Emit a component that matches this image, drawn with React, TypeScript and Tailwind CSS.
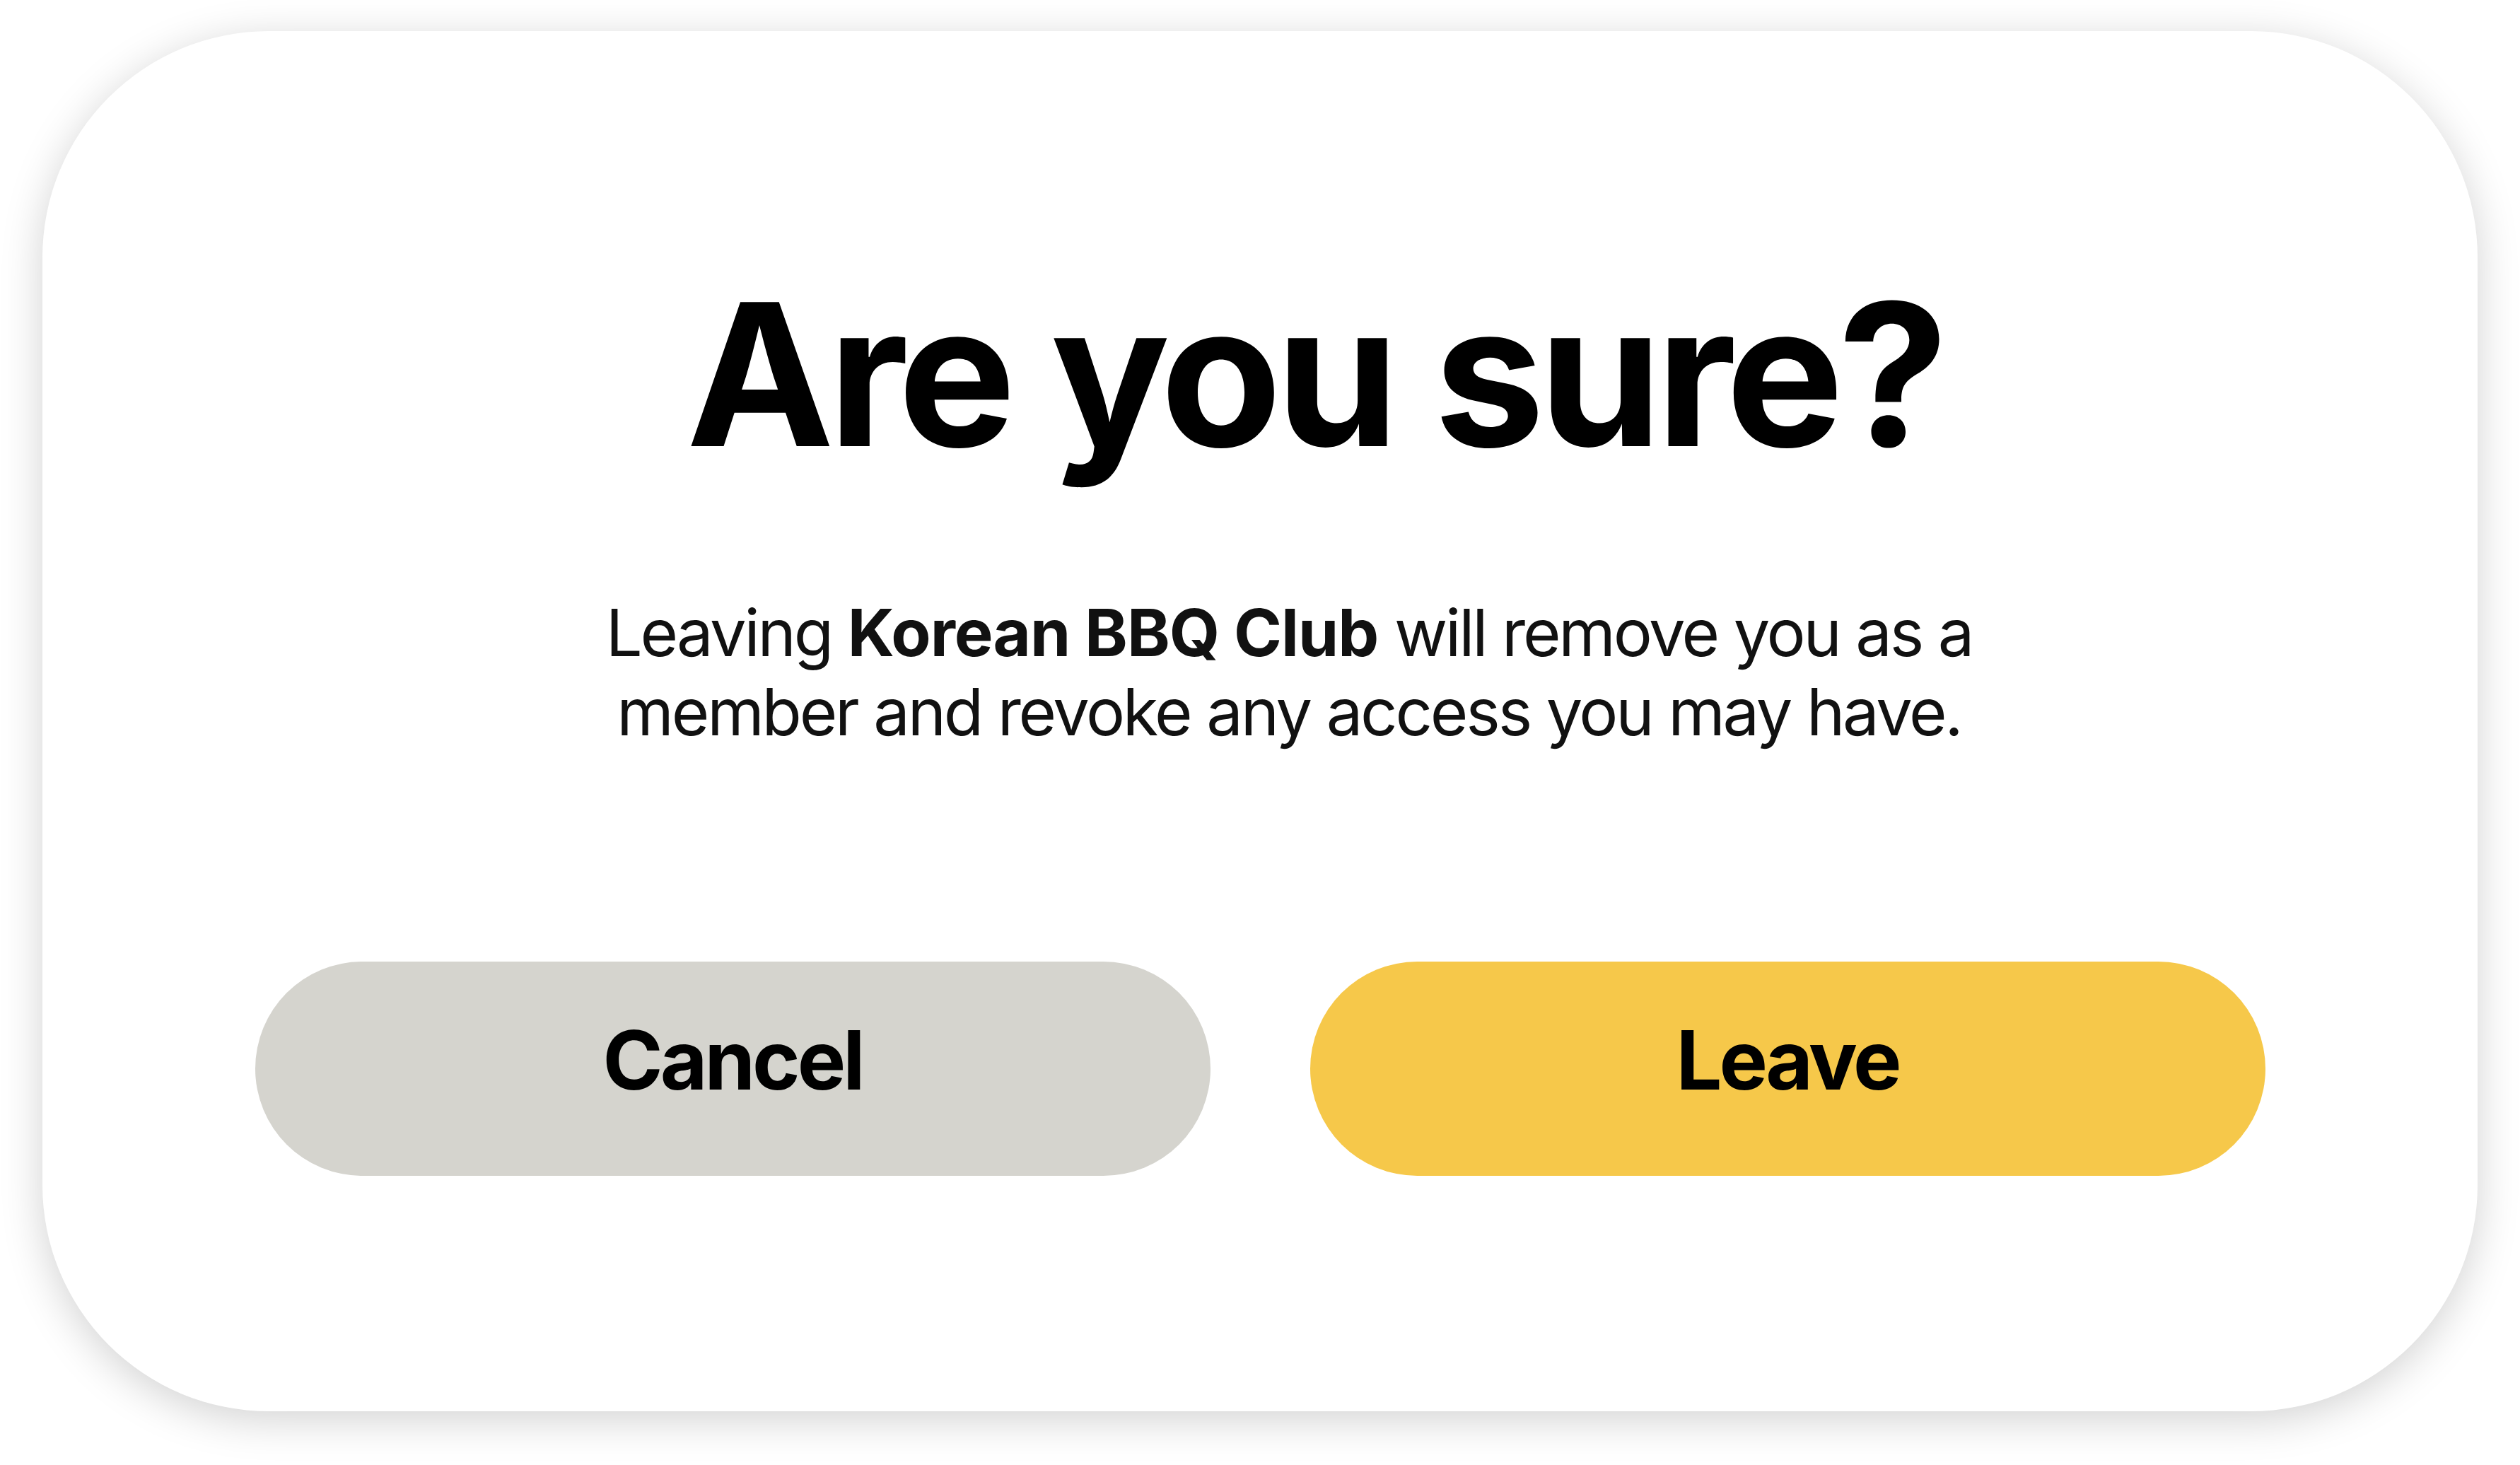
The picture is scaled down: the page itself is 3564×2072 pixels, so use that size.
export default function App() {
  return (
    <div className="min-h-screen w-full bg-white px-[60px] pt-[44px] pb-[76px] font-['Inter','Noto_Sans',sans-serif] text-black">
      <div className="flex h-[1952px] flex-col items-center rounded-[320px] bg-white pt-[346px] shadow-[0_12px_60px_rgba(0,0,0,0.18)]">
        <h1 className="ml-[154px] text-[280px] font-bold leading-none tracking-[-8.5px]">
          Are you sure?
        </h1>

        <p className="mt-[169px] ml-[82px] text-center text-[92px] leading-[112px] tracking-[-3.2px] text-[#111]">
          Leaving{" "}
          <span className="font-bold tracking-[-1px]">Korean BBQ Club</span>{" "}
          will remove you as a
          <br />
          member and revoke any access you may have.
        </p>

        <div className="mt-[297px] flex gap-[141px]">
          <button className="flex h-[303px] w-[1351px] items-center justify-center rounded-full bg-[#d5d4ce] pb-[24px] text-[115px] font-bold leading-none tracking-[-4px]">
            Cancel
          </button>
          <button className="flex h-[303px] w-[1351px] items-center justify-center rounded-full bg-[#f6c84a] pb-[24px] text-[115px] font-bold leading-none tracking-[-4px]">
            Leave
          </button>
        </div>
      </div>
    </div>
  );
}
